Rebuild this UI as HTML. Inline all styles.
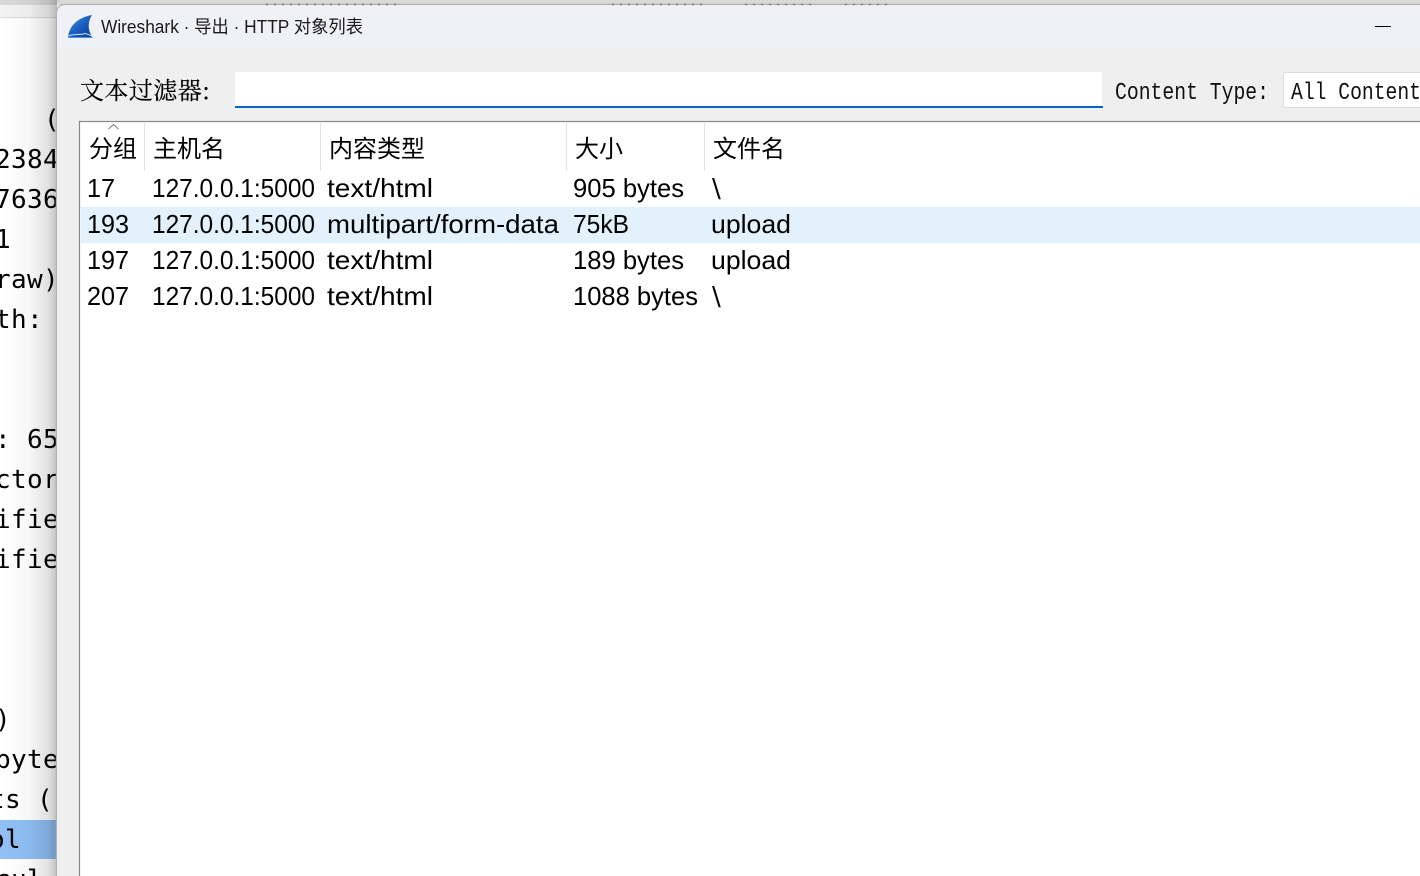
<!DOCTYPE html>
<html><head><meta charset="utf-8"><style>
html,body{margin:0;padding:0;width:1420px;height:876px;overflow:hidden;background:#fff}
svg{display:block}
.m{font-family:"DejaVu Sans Mono","Liberation Mono",monospace;font-size:26px;letter-spacing:.35px;fill:#000}
.h{font-family:"Liberation Sans","Noto Sans CJK SC",sans-serif;font-size:24px;fill:#000}
.r{font-family:"Liberation Sans",sans-serif;font-size:26px;fill:#000}
.b{font-family:"DejaVu Sans",sans-serif;font-size:26px;fill:#000}
.s{font-family:"Liberation Mono",monospace;font-size:24px;fill:#111}
</style></head><body>
<svg width="1420" height="876" viewBox="0 0 1420 876" xmlns="http://www.w3.org/2000/svg">
<defs>
<linearGradient id="sh" x1="0" x2="1" y1="0" y2="0"><stop offset="0" stop-color="#000" stop-opacity="0"/><stop offset=".5" stop-color="#000" stop-opacity=".03"/><stop offset=".85" stop-color="#000" stop-opacity=".12"/><stop offset="1" stop-color="#000" stop-opacity=".24"/></linearGradient>
<linearGradient id="fin" x1="0" x2="1" y1="0" y2="1"><stop offset="0" stop-color="#3f9bea"/><stop offset=".5" stop-color="#1a5fc0"/><stop offset="1" stop-color="#0c3c94"/></linearGradient>
<clipPath id="win"><path d="M57 876V14Q57 5 66 5H1420V876Z"/></clipPath>
<clipPath id="left"><rect x="0" y="0" width="58" height="876"/></clipPath>
</defs>
<rect width="1420" height="876" fill="#fff"/>
<rect x="0" y="0" width="70" height="17" fill="#f3f3f3"/>
<rect x="0" y="17" width="70" height="1" fill="#d8d8d8"/>
<rect x="0" y="0" width="1420" height="5" fill="#d8d8d8"/>
<rect x="0" y="820" width="70" height="39" fill="#90c0f5"/>
<g class="m" clip-path="url(#left)">
<text x="44" y="128">(</text>
<text x="-5" y="168">2384</text>
<text x="-5" y="208">7636</text>
<text x="-5" y="248">1</text>
<text x="-5" y="288">raw)</text>
<text x="-5" y="328">th:</text>
<text x="-5" y="448">: 65</text>
<text x="-5" y="488">ctor</text>
<text x="-5" y="528">ifie</text>
<text x="-5" y="568">ifie</text>
<text x="-5" y="728">)</text>
<text x="-5" y="768">byte</text>
<text x="-11" y="808">ts (1</text>
<text x="-11" y="848">ol</text>
<text x="-5" y="888">cul</text>
</g>
<rect x="0" y="0" width="57" height="876" fill="url(#sh)"/>
<path d="M56.500 876V14Q56.500 4.500 66 4.500H1420" fill="none" stroke="#b0b0b0" stroke-width="1.500"/>
<g clip-path="url(#win)">
<rect x="57" y="5" width="1363" height="871" fill="#efefef"/>
<rect x="57" y="6" width="1363" height="43" fill="#f0f1f7"/>
</g>
<g stroke="#444" stroke-width="1.500" stroke-dasharray="2 6" opacity=".55"><path d="M266 4.500H396M612 4.500H704M745 4.500H815M845 4.500H889"/></g>
<path d="M68 37.500C69 27 76 18 92 15C87.500 22 87.500 30 92.500 37.500Z" fill="url(#fin)"/>
<path d="M68.500 36C74 33.500 80 35.500 85 33.500C87.500 34 90 35 92 36.500" fill="none" stroke="#bfe0f7" stroke-width="1"/>
<path d="M68 37.500H92.500" stroke="#4a8fd8" stroke-width="1"/>
<text x="101" y="33" font-family="'Liberation Sans','Noto Sans CJK SC',sans-serif" font-size="18" fill="#1a1a1a" textLength="262" lengthAdjust="spacingAndGlyphs">Wireshark · 导出 · HTTP 对象列表</text>
<rect x="1375" y="26" width="16" height="1" fill="#000"/>
<text x="80" y="99" font-family="'Noto Serif CJK SC','Noto Sans CJK SC',serif" font-size="24" fill="#000" stroke="#000" stroke-width=".2" textLength="130" lengthAdjust="spacing">文本过滤器:</text>
<rect x="235" y="72" width="867" height="36" fill="#fff"/>
<rect x="235" y="106" width="868" height="2" fill="#0067c0"/>
<text class="s" x="1115" y="99" textLength="154" lengthAdjust="spacingAndGlyphs">Content Type:</text>
<rect x="1283.500" y="72.500" width="150" height="35" rx="2" fill="#fff" stroke="#dcdcdc"/>
<text class="s" x="1291" y="99" textLength="130" lengthAdjust="spacingAndGlyphs">All Content</text>
<rect x="79.500" y="121.500" width="1350" height="770" fill="#fff" stroke="#87878f" stroke-width="1.200"/>
<g fill="#e3e3e3"><rect x="144" y="123" width="1" height="48"/><rect x="320" y="123" width="1" height="48"/><rect x="566" y="123" width="1" height="48"/><rect x="704" y="123" width="1" height="48"/></g>
<path d="M108.500 129L113.500 124.500L118.500 129" fill="none" stroke="#777" stroke-width="1"/>
<rect x="81" y="207" width="1339" height="36" fill="#e3f1fc"/>
<g class="h">
<text x="89" y="157">分组</text>
<text x="153" y="157">主机名</text>
<text x="329" y="157">内容类型</text>
<text x="575" y="157">大小</text>
<text x="713" y="157">文件名</text>
</g>
<g class="r">
<text x="87" y="197" textLength="28" lengthAdjust="spacingAndGlyphs">17</text>
<text x="152" y="197" textLength="163" lengthAdjust="spacingAndGlyphs">127.0.0.1:5000</text>
<text x="327" y="197" textLength="106" lengthAdjust="spacingAndGlyphs">text/html</text>
<text x="573" y="197" textLength="111" lengthAdjust="spacingAndGlyphs">905 bytes</text>
<text class="b" x="712" y="197">\</text>
<text x="87" y="233" textLength="42" lengthAdjust="spacingAndGlyphs">193</text>
<text x="152" y="233" textLength="163" lengthAdjust="spacingAndGlyphs">127.0.0.1:5000</text>
<text x="327" y="233" textLength="232" lengthAdjust="spacingAndGlyphs">multipart/form-data</text>
<text x="573" y="233" textLength="56" lengthAdjust="spacingAndGlyphs">75kB</text>
<text x="711" y="233" textLength="80" lengthAdjust="spacingAndGlyphs">upload</text>
<text x="87" y="269" textLength="42" lengthAdjust="spacingAndGlyphs">197</text>
<text x="152" y="269" textLength="163" lengthAdjust="spacingAndGlyphs">127.0.0.1:5000</text>
<text x="327" y="269" textLength="106" lengthAdjust="spacingAndGlyphs">text/html</text>
<text x="573" y="269" textLength="111" lengthAdjust="spacingAndGlyphs">189 bytes</text>
<text x="711" y="269" textLength="80" lengthAdjust="spacingAndGlyphs">upload</text>
<text x="87" y="305" textLength="42" lengthAdjust="spacingAndGlyphs">207</text>
<text x="152" y="305" textLength="163" lengthAdjust="spacingAndGlyphs">127.0.0.1:5000</text>
<text x="327" y="305" textLength="106" lengthAdjust="spacingAndGlyphs">text/html</text>
<text x="573" y="305" textLength="125" lengthAdjust="spacingAndGlyphs">1088 bytes</text>
<text class="b" x="712" y="305">\</text>
</g>
</svg>
</body></html>
